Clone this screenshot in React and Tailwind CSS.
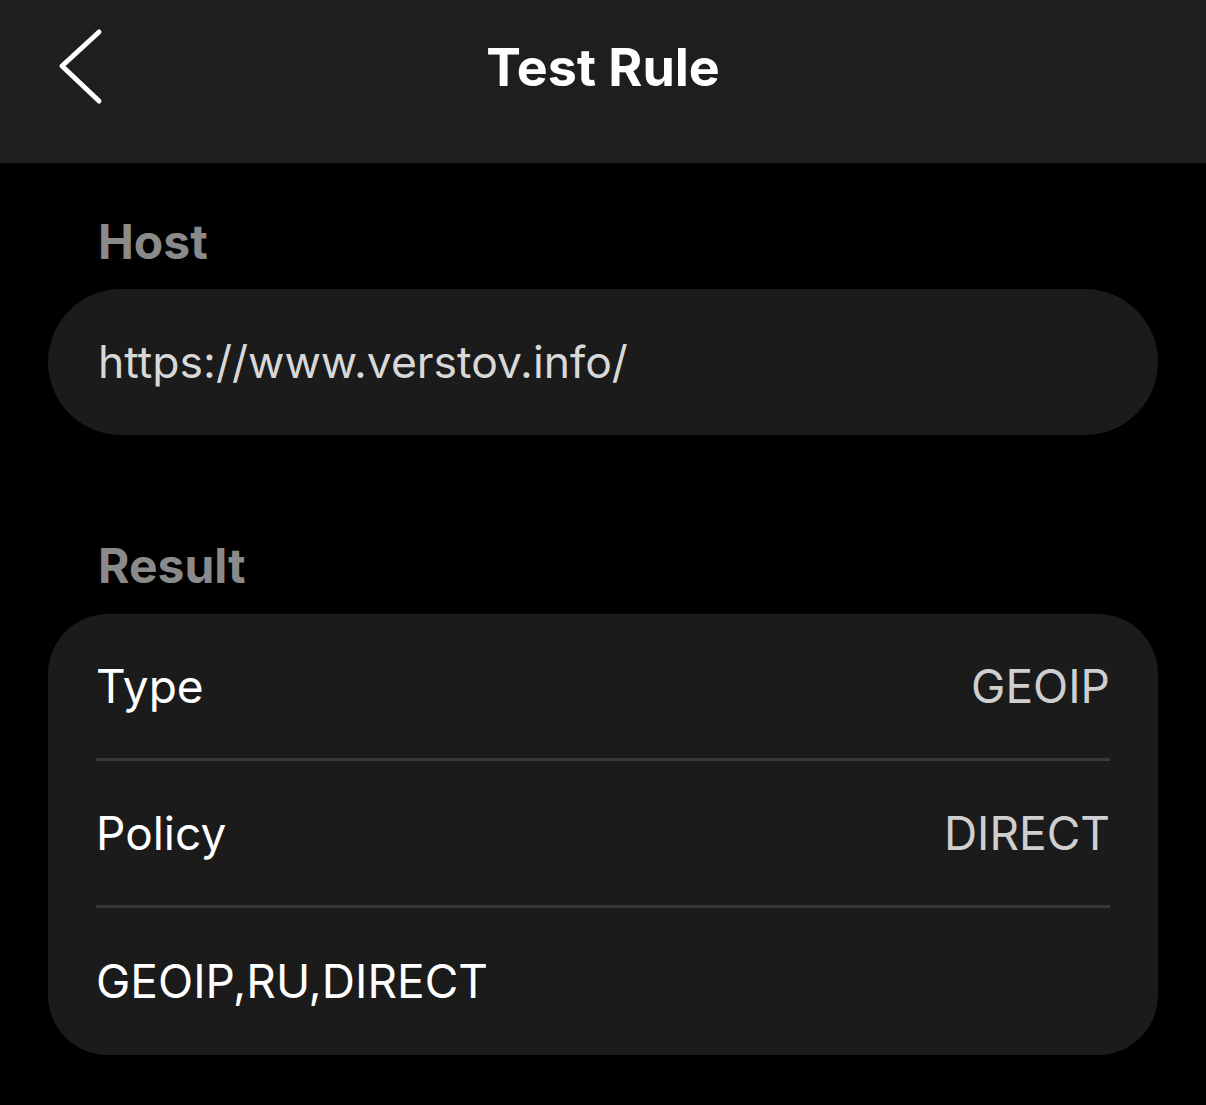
import React from "react";

const font = { fontFamily: "Inter, 'Noto Sans', sans-serif" };

function Row({ label, value, last }) {
  return (
    <div className="px-[48px]">
      <div
        className={
          "h-[147px] flex items-center justify-between " +
          (last ? "" : "border-b-[3px] border-[#38383a]")
        }
      >
        <span className="text-[46px] text-white">{label}</span>
        {value && <span className="text-[46px] text-[#cfcfcf]">{value}</span>}
      </div>
    </div>
  );
}

export default function App() {
  return (
    <div className="min-h-screen bg-black" style={font}>
      {/* Header */}
      <div className="h-[163px] bg-[#1e1e1f] grid grid-cols-[1fr_auto_1fr] items-start">
        <div className="pl-[58px] pt-[28px]">
          <svg width="46" height="80" viewBox="0 0 46 80" fill="none">
            <path
              d="M41 4 L4 38 L41 73"
              stroke="white"
              strokeWidth="5"
              strokeLinecap="round"
              strokeLinejoin="round"
            />
          </svg>
        </div>
        <h1 className="text-[52px] font-bold text-white leading-none pt-[42px]">Test Rule</h1>
        <div />
      </div>

      <div className="px-[48px]">
        {/* Host */}
        <div className="pl-[50px] pt-[46px] pb-[14px] text-[48px] font-bold text-[#8a8a8a] leading-[66px]">
          Host
        </div>
        <div className="h-[146px] rounded-full bg-[#1b1b1b] flex items-center px-[50px]">
          <span className="text-[44.5px] text-[#d8d8d8]">https://www.verstov.info/</span>
        </div>

        {/* Result */}
        <div className="pl-[50px] pt-[98px] pb-[15px] text-[48px] font-bold text-[#8a8a8a] leading-[66px]">
          Result
        </div>
        <div className="rounded-[60px] bg-[#1b1b1b]">
          <Row label="Type" value="GEOIP" />
          <Row label="Policy" value="DIRECT" />
          <Row label="GEOIP,RU,DIRECT" last />
        </div>
      </div>
    </div>
  );
}
